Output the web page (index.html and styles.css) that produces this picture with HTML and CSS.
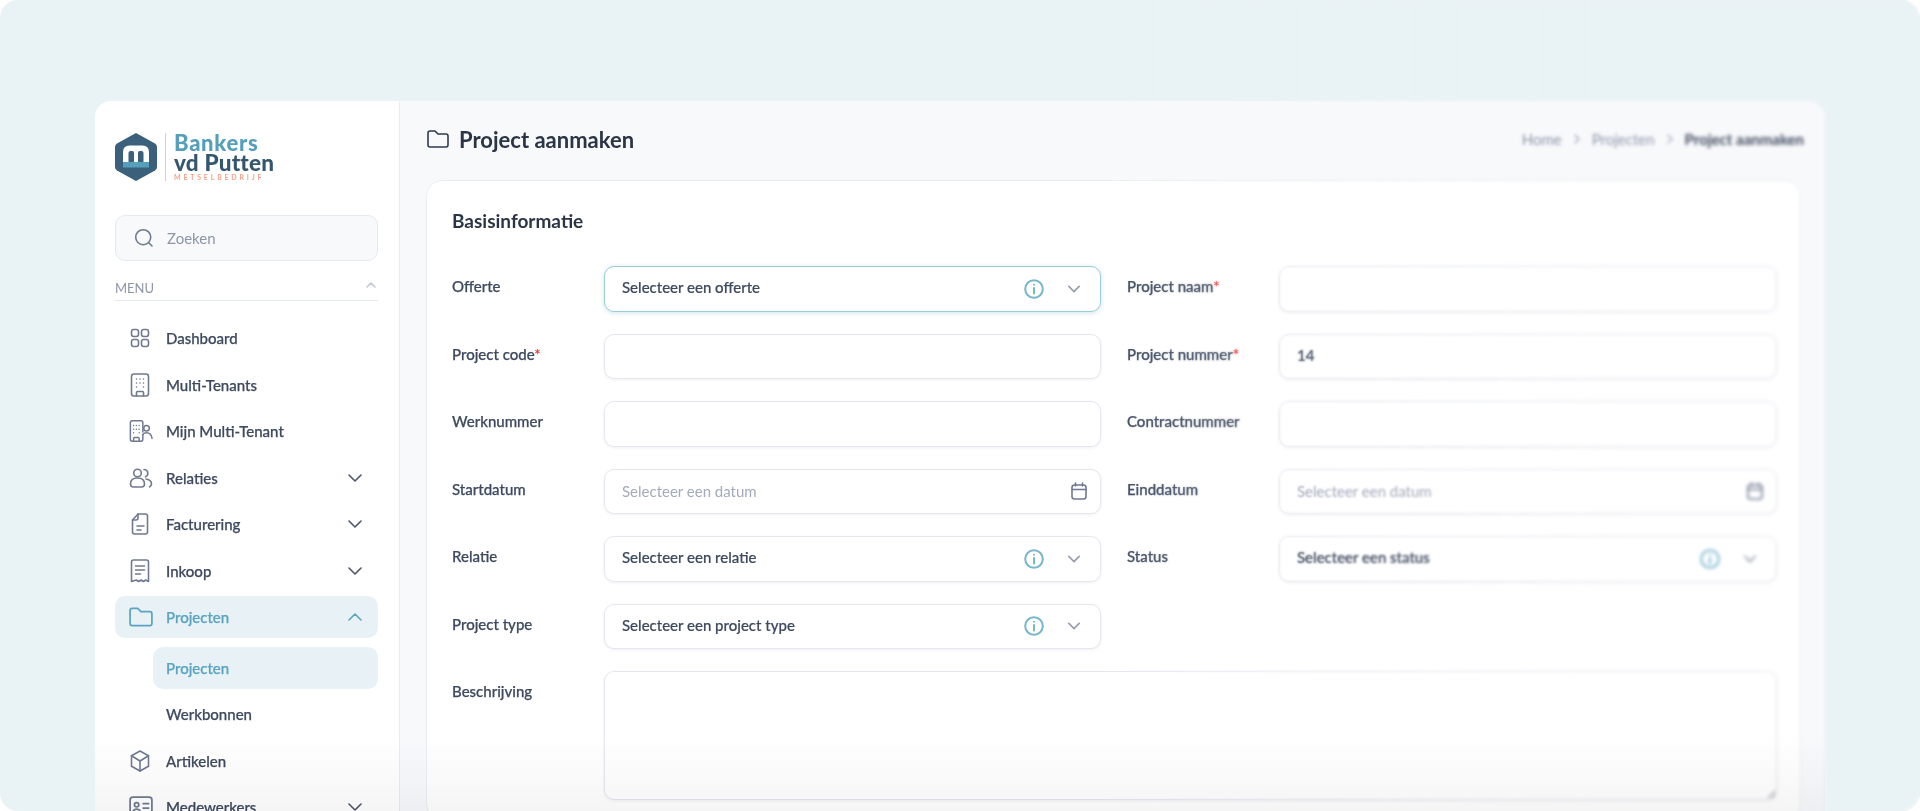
FILE: index.html
```html
<!DOCTYPE html>
<html lang="nl">
<head>
    <meta charset="UTF-8">
    <meta name="viewport" content="width=device-width, initial-scale=1.0">
    <title>Project aanmaken</title>
    <link rel="stylesheet" href="styles.css">
</head>
<body>
    <div class="frame">
        <div class="window">
            <aside class="sidebar">
                <div class="logo">
                    <svg class="logo-mark" viewBox="0 0 42 48" width="42" height="48">
                        <path d="M21 0 L40 10.500 Q42 11.700 42 14 L42 34 Q42 36.300 40 37.500 L21 48 L2 37.500 Q0 36.300 0 34 L0 14 Q0 11.700 2 10.500 Z" fill="#3a607c"/>
                        <path d="M8 29 V19 Q8 12.500 14.500 12.500 H27.500 Q34 12.500 34 19 V29 H28.500 V20 Q28.500 18 26.500 18 H24.500 Q23 18 23 20 V29 H19 V20 Q19 18 17.500 18 H15.500 Q13.500 18 13.500 20 V29 Z" fill="#fff"/>
                        <rect x="8" y="29" width="26" height="5.500" fill="#559fbd"/>
                    </svg>
                    <div class="logo-text">
                        <span class="logo-top">Bankers</span>
                        <span class="logo-mid">vd Putten</span>
                        <span class="logo-sub">METSELBEDRIJF</span>
                    </div>
                </div>
                <div class="search">
                    <svg class="ico" viewBox="0 0 20 20" width="20" height="20"><circle cx="9.200" cy="9.200" r="7.500"/><path d="M15 15l3 3"/></svg>
                    <span>Zoeken</span>
                </div>
                <div class="menu-head">
                    <span>MENU</span>
                    <svg class="ico" viewBox="0 0 10 6" width="10" height="6"><path d="M1 5l4-4 4 4"/></svg>
                </div>
                <nav class="nav">
                    <a class="item">
                        <svg class="ico" viewBox="0 0 20 20"><rect x="1.500" y="1.500" width="7" height="7" rx="2.200"/><rect x="11.500" y="1.500" width="7" height="7" rx="2.200"/><rect x="1.500" y="11.500" width="7" height="7" rx="2.200"/><rect x="11.500" y="11.500" width="7" height="7" rx="2.200"/></svg>
                        <span>Dashboard</span>
                    </a>
                    <a class="item">
                        <svg class="ico" viewBox="0 0 20 24"><rect x="1.500" y="1" width="17" height="22" rx="2.500"/><path d="M6.500 23v-3.500q0-1 1-1h5q1 0 1 1V23M6.500 6h.01M10 6h.01M13.500 6h.01M6.500 10h.01M10 10h.01M13.500 10h.01M6.500 14h.01M13.500 14h.01"/></svg>
                        <span>Multi-Tenants</span>
                    </a>
                    <a class="item">
                        <svg class="ico ico-wide" viewBox="0 0 26 24"><path d="M15 13V3q0-2-2-2H3.500q-2 0-2 2v18q0 2 2 2H13q2 0 2-2v-5"/><path d="M5 23v-3q0-1 1-1h4q1 0 1 1v3M5 6h.01M8 6h.01M11 6h.01M5 10h.01M8 10h.01M11 10h.01M5 14h.01M11 14h.01"/><circle cx="19" cy="9" r="3"/><path d="M15 16q1-2 4-2 5 0 6 6"/></svg>
                        <span>Mijn Multi-Tenant</span>
                    </a>
                    <a class="item">
                        <svg class="ico ico-wide" viewBox="0 0 24 20"><circle cx="8.500" cy="5" r="3.800"/><path d="M15 1.500a3.800 3.800 0 0 1 1.500 7.300"/><path d="M1.500 16c0-4 3-6 7-6s7 2 7 6q0 3-3 3H4.500q-3 0-3-3Z"/><path d="M17 11c3.500.5 5.500 2.500 5.500 5 0 1.500-1 2.500-2 3"/></svg>
                        <span>Relaties</span>
                        <svg class="ico chev" viewBox="0 0 14 8"><path d="M1 1l6 6 6-6"/></svg>
                    </a>
                    <a class="item">
                        <svg class="ico" viewBox="0 0 20 22"><path d="M8 1h7.500q2 0 2 2v16q0 2-2 2h-11q-2 0-2-2V7Z"/><path d="M8 1v4q0 2-2 2H2.500M7 13h7M7 17h4"/></svg>
                        <span>Facturering</span>
                        <svg class="ico chev" viewBox="0 0 14 8"><path d="M1 1l6 6 6-6"/></svg>
                    </a>
                    <a class="item">
                        <svg class="ico" viewBox="0 0 20 24"><path d="M1.500 22.500V3q0-2 2-2h13q2 0 2 2v19.500l-2.800-1.500-2.300 1.500-2.400-1.500-2.400 1.500-2.300-1.500Z"/><path d="M5.500 7h9M5.500 11h9M5.500 15h5"/></svg>
                        <span>Inkoop</span>
                        <svg class="ico chev" viewBox="0 0 14 8"><path d="M1 1l6 6 6-6"/></svg>
                    </a>
                    <a class="item active">
                        <svg class="ico ico-wide" viewBox="0 0 22 18"><path d="M1 3q0-2 2-2h5l3 3h8q2 0 2 2v9q0 2-2 2H3q-2 0-2-2Z"/></svg>
                        <span>Projecten</span>
                        <svg class="ico chev" viewBox="0 0 14 8"><path d="M1 7l6-6 6 6"/></svg>
                    </a>
                    <div class="sub">
                        <a class="item active">Projecten</a>
                        <a class="item">Werkbonnen</a>
                    </div>
                    <a class="item">
                        <svg class="ico" viewBox="0 0 20 22"><path d="M10 1l8.500 4.800v10.400L10 21l-8.500-4.800V5.800Z"/><path d="M1.500 5.800L10 11l8.500-5.200M10 11v10"/></svg>
                        <span>Artikelen</span>
                    </a>
                    <a class="item">
                        <svg class="ico ico-wide" viewBox="0 0 22 20"><rect x="1" y="1" width="20" height="18" rx="2.500"/><circle cx="7" cy="8" r="2"/><path d="M3.500 15q.5-3 3.500-3t3.500 3M13 7h5M13 11h5"/></svg>
                        <span>Medewerkers</span>
                        <svg class="ico chev" viewBox="0 0 14 8"><path d="M1 1l6 6 6-6"/></svg>
                    </a>
                </nav>
            </aside>
            <main class="main">
                <header class="topbar">
                    <div class="title">
                        <svg class="ico" viewBox="0 0 22 18" width="22" height="18"><path d="M1 3q0-2 2-2h5l3 3h8q2 0 2 2v9q0 2-2 2H3q-2 0-2-2Z"/></svg>
                        <h1>Project aanmaken</h1>
                    </div>
                    <div class="crumbs">
                        <span>Home</span>
                        <svg class="ico" viewBox="0 0 6 10" width="6" height="10"><path d="M1 1l4 4-4 4"/></svg>
                        <span>Projecten</span>
                        <svg class="ico" viewBox="0 0 6 10" width="6" height="10"><path d="M1 1l4 4-4 4"/></svg>
                        <span class="current">Project aanmaken</span>
                    </div>
                </header>
                <section class="card">
                    <h2>Basisinformatie</h2>
                    <div class="form">
                        <div class="row">
                            <label>Offerte</label>
                            <div class="field focus">
                                <span class="val">Selecteer een offerte</span>
                                <svg class="info" viewBox="0 0 20 20"><circle cx="10" cy="10" r="8.800"/><path d="M10 9v5.500M10 5.800h.01"/></svg>
                                <svg class="ico arrow" viewBox="0 0 14 8"><path d="M1 1l6 6 6-6"/></svg>
                            </div>
                        </div>
                        <div class="row">
                            <label>Project naam<b>*</b></label>
                            <div class="field"></div>
                        </div>
                        <div class="row">
                            <label>Project code<b>*</b></label>
                            <div class="field"></div>
                        </div>
                        <div class="row">
                            <label>Project nummer<b>*</b></label>
                            <div class="field"><span class="val">14</span></div>
                        </div>
                        <div class="row">
                            <label>Werknummer</label>
                            <div class="field"></div>
                        </div>
                        <div class="row">
                            <label>Contractnummer</label>
                            <div class="field"></div>
                        </div>
                        <div class="row">
                            <label>Startdatum</label>
                            <div class="field">
                                <span class="val hint">Selecteer een datum</span>
                                <svg class="ico cal" viewBox="0 0 16 18"><rect x="1" y="3" width="14" height="14" rx="2.500"/><path d="M1 7.500h14M4.500 1v3M11.500 1v3"/></svg>
                            </div>
                        </div>
                        <div class="row">
                            <label>Einddatum</label>
                            <div class="field">
                                <span class="val hint">Selecteer een datum</span>
                                <svg class="ico cal" viewBox="0 0 16 18"><rect x="1" y="3" width="14" height="14" rx="2.500"/><path d="M1 7.500h14M4.500 1v3M11.500 1v3"/></svg>
                            </div>
                        </div>
                        <div class="row">
                            <label>Relatie</label>
                            <div class="field">
                                <span class="val">Selecteer een relatie</span>
                                <svg class="info" viewBox="0 0 20 20"><circle cx="10" cy="10" r="8.800"/><path d="M10 9v5.500M10 5.800h.01"/></svg>
                                <svg class="ico arrow" viewBox="0 0 14 8"><path d="M1 1l6 6 6-6"/></svg>
                            </div>
                        </div>
                        <div class="row">
                            <label>Status</label>
                            <div class="field">
                                <span class="val">Selecteer een status</span>
                                <svg class="info" viewBox="0 0 20 20"><circle cx="10" cy="10" r="8.800"/><path d="M10 9v5.500M10 5.800h.01"/></svg>
                                <svg class="ico arrow" viewBox="0 0 14 8"><path d="M1 1l6 6 6-6"/></svg>
                            </div>
                        </div>
                        <div class="row">
                            <label>Project type</label>
                            <div class="field">
                                <span class="val">Selecteer een project type</span>
                                <svg class="info" viewBox="0 0 20 20"><circle cx="10" cy="10" r="8.800"/><path d="M10 9v5.500M10 5.800h.01"/></svg>
                                <svg class="ico arrow" viewBox="0 0 14 8"><path d="M1 1l6 6 6-6"/></svg>
                            </div>
                        </div>
                        <div class="row"></div>
                        <div class="row wide">
                            <label>Beschrijving</label>
                            <textarea class="field area"></textarea>
                        </div>
                    </div>
                </section>
            </main>
        </div>
        <div class="blur blur-a"></div>
        <div class="blur blur-b"></div>
        <div class="fade"></div>
    </div>
</body>
</html>
```

FILE: styles.css
```css
* {
    box-sizing: border-box;
}
html, body {
    margin: 0;
    height: 100%;
    overflow: hidden;
    background: #fff;
}
body {
    font-family: Lato, "Open Sans", sans-serif;
    font-size: 15px;
    color: #3f4a5f;
}
.frame {
    position: relative;
    height: 811px;
    padding: 101px 95px 0;
    background: #e9f2f5;
    border-radius: 18px;
    overflow: hidden;
}
.window {
    display: flex;
    height: 710px;
    background: #f8f9fb;
    border-radius: 16px 16px 0 0;
    overflow: hidden;
    filter: blur(0.45px);
}
.ico {
    fill: none;
    stroke: #6f7a90;
    stroke-width: 1.6;
    stroke-linecap: round;
    stroke-linejoin: round;
    flex: none;
}

/* sidebar */
.sidebar {
    width: 305px;
    flex: none;
    padding: 32px 21px 0 20px;
    background: #fff;
    border-right: 1px solid #e9edf2;
}
.logo {
    display: flex;
    align-items: stretch;
    height: 48px;
}
.logo-text {
    display: flex;
    flex-direction: column;
    margin-left: 8px;
    padding-left: 8px;
    border-left: 1px solid #f6c4b4;
    font-weight: 900;
}
.logo-top {
    font-size: 22px;
    line-height: 20px;
    color: #559fbd;
    letter-spacing: 0.7px;
}
.logo-mid {
    font-size: 22.5px;
    line-height: 20px;
    color: #35566f;
    letter-spacing: 0.2px;
}
.logo-sub {
    font-size: 7px;
    line-height: 8px;
    color: #f2a48d;
    letter-spacing: 2.8px;
    font-weight: 700;
}
.search {
    display: flex;
    align-items: center;
    gap: 13px;
    height: 46px;
    margin-top: 34px;
    padding-left: 18px;
    background: #f7f9fb;
    border: 1px solid #e4e8f0;
    border-radius: 10px;
    color: #8d95a8;
}
.menu-head {
    display: flex;
    justify-content: space-between;
    align-items: center;
    height: 40px;
    padding-top: 15px;
    padding-right: 2px;
    border-bottom: 1px solid #e4e8f0;
    font-size: 13px;
    color: #8d95a8;
}
.menu-head .ico {
    stroke: #c3c9d4;
    margin-top: -6px;
}
.nav {
    display: flex;
    flex-direction: column;
    gap: 4.5px;
    margin-top: 16px;
}
.item {
    display: flex;
    align-items: center;
    height: 42px;
    padding: 0 16px 0 15px;
    border-radius: 10px;
    font-weight: 500;
    white-space: nowrap;
    -webkit-text-stroke: 0.25px;
}
.item .ico {
    width: 20px;
    height: 24px;
    margin: 0 16px 0 0;
}
.item .ico-wide {
    width: 24px;
    height: 24px;
    margin: 0 13px 0 -1px;
}
.item .chev {
    width: 14px;
    height: 8px;
    margin: 0 0 0 auto;
    stroke: #4b566b;
}
.item.active {
    background: #e8f1f5;
    color: #5aa4c1;
}
.item.active .ico {
    stroke: #5aa4c1;
}
.sub {
    display: flex;
    flex-direction: column;
    gap: 4.5px;
    margin-top: 4px;
    margin-left: 38px;
}
.sub .item {
    padding-left: 13px;
}

/* main */
.main {
    flex: 1;
    min-width: 0;
}
.topbar {
    display: flex;
    justify-content: space-between;
    align-items: center;
    height: 79px;
    padding: 0 21px 3px 27px;
}
.title {
    display: flex;
    align-items: center;
    gap: 10px;
}
.title .ico {
    stroke: #2f3a4e;
}
h1 {
    margin: 0;
    font-size: 22px;
    font-weight: 700;
    color: #2b3546;
}
.crumbs {
    display: flex;
    align-items: center;
    gap: 12px;
    font-size: 15px;
    color: #8d95a8;
}
.crumbs .ico {
    stroke: #a9b0be;
}
.crumbs .current {
    color: #3f4a5f;
    font-weight: 700;
}
.card {
    height: 640px;
    margin: 0 24px 0 26px;
    padding: 27px 24px 0 25px;
    background: #fff;
    border: 1px solid #eaedf2;
    border-radius: 16px;
}
h2 {
    margin: 0 0 32px;
    font-size: 19px;
    line-height: 26px;
    font-weight: 700;
    color: #2b3546;
}
.form {
    display: grid;
    grid-template-columns: 649px 650px;
    column-gap: 26px;
    row-gap: 22px;
}
.row {
    display: grid;
    grid-template-columns: 152px 1fr;
    min-height: 45.5px;
}
.wide {
    grid-column: 1 / 3;
}
label {
    padding-top: 10px;
    line-height: 20px;
    font-weight: 500;
    -webkit-text-stroke: 0.25px;
}
label b {
    color: #ef4444;
    font-weight: 500;
}
.field {
    display: flex;
    align-items: center;
    width: 100%;
    height: 45.500px;
    padding: 0 17px;
    background: #fff;
    border: 1.5px solid #e4e7ee;
    border-radius: 10px;
    box-shadow: 0 1px 3px rgba(60, 70, 100, 0.08);
}
.focus {
    border-color: #9ccbdc;
    box-shadow: 0 1px 5px rgba(90, 164, 193, 0.3);
}
.area {
    display: block;
    height: 129px;
    font: inherit;
}
.val {
    flex: 1;
    padding-bottom: 3px;
    white-space: nowrap;
    font-weight: 500;
    -webkit-text-stroke: 0.2px;
}
.hint {
    padding-bottom: 0;
    color: #a3abbb;
    font-weight: 400;
    -webkit-text-stroke: 0;
}
.info {
    width: 20px;
    height: 20px;
    margin-right: 24px;
    fill: none;
    stroke: #78b6cc;
    stroke-width: 2;
    stroke-linecap: round;
}
.arrow {
    width: 12px;
    height: 8px;
    margin-right: 3px;
    stroke: #99a1b1;
    stroke-width: 2;
}
.cal {
    width: 16px;
    height: 18px;
    margin-right: -4px;
}

/* soft focus over the right part and the bottom edge */
.blur {
    position: absolute;
    inset: 0;
    pointer-events: none;
}
.blur-a {
    backdrop-filter: blur(0.8px);
    mask-image: linear-gradient(to right, transparent 1100px, #000 1350px);
}
.blur-b {
    backdrop-filter: blur(1.6px);
    mask-image: linear-gradient(to right, transparent 1350px, #000 1650px);
}
.fade {
    position: absolute;
    left: 95px;
    right: 95px;
    bottom: 0;
    height: 75px;
    background: linear-gradient(to bottom, #fff, #f5f5f6);
    mix-blend-mode: multiply;
    pointer-events: none;
}
```
